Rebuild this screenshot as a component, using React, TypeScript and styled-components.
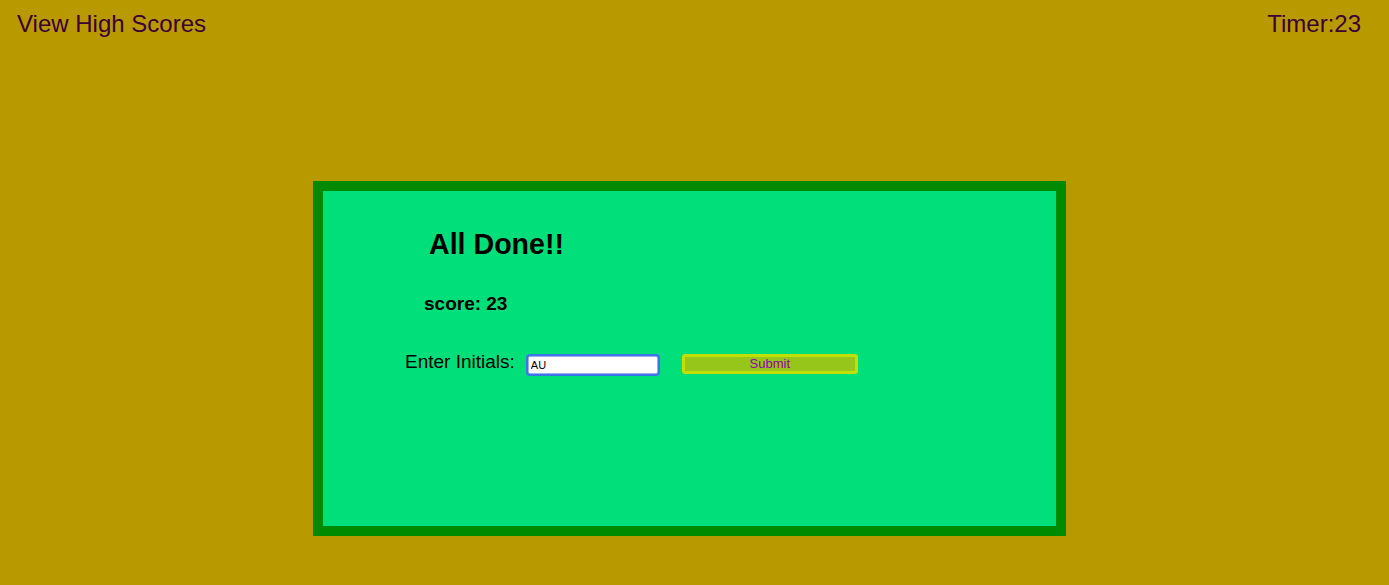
import React from "react";
import styled, { createGlobalStyle } from "styled-components";

const Global = createGlobalStyle`
  html, body { margin: 0; padding: 0; }
  body {
    background: #b89a00;
    font-family: "Liberation Sans", Arial, sans-serif;
    width: 1389px;
    height: 585px;
    overflow: hidden;
  }
`;

const Page = styled.div`
  display: flex;
  flex-direction: column;
  align-items: flex-start;
`;

const Header = styled.header`
  width: 100%;
  box-sizing: border-box;
  display: flex;
  justify-content: space-between;
  align-items: center;
  padding: 10px 28px 0 17px;
  font-size: 24px;
  line-height: 28px;
  color: #3b0038;
`;

const Card = styled.section`
  margin: 143px 0 0 313px;
  width: 753px;
  height: 355px;
  box-sizing: border-box;
  border: 10px solid #008a00;
  background: #00df7a;
  display: flex;
  flex-direction: column;
  align-items: flex-start;
`;

const Title = styled.h1`
  margin: 37px 0 0 106px;
  font-size: 28.6px;
  line-height: 32px;
  font-weight: bold;
  color: #000;
`;

const Score = styled.p`
  margin: 33px 0 0 101px;
  font-size: 19px;
  line-height: 22px;
  font-weight: bold;
  color: #000;
`;

const Row = styled.div`
  margin: 36px 0 0 82px;
  display: flex;
  align-items: flex-start;
`;

const Label = styled.label`
  font-size: 19px;
  line-height: 22px;
  color: #000;
`;

const Input = styled.input`
  margin: 5px 0 0 13px;
  width: 130px;
  height: 18px;
  box-sizing: border-box;
  border: 1px solid #9ab0f0;
  outline: 2px solid #3d74e8;
  outline-offset: 0;
  border-radius: 2px;
  background: #fff;
  font-family: "Liberation Sans", Arial, sans-serif;
  font-size: 11px;
  padding: 0 2px;
  color: #000;
`;

const Button = styled.button`
  margin: 3px 0 0 24px;
  width: 176px;
  height: 20px;
  box-sizing: border-box;
  border: 3px solid #c2e000;
  border-radius: 3px;
  background: #96c61a;
  color: #9000b0;
  font-family: "Liberation Sans", Arial, sans-serif;
  font-size: 13px;
  line-height: 14px;
  padding: 0;
`;

export default function App() {
  return (
    <Page>
      <Global />
      <Header>
        <span>View High Scores</span>
        <span>Timer:23</span>
      </Header>
      <Card>
        <Title>All Done!!</Title>
        <Score>score: 23</Score>
        <Row>
          <Label>Enter Initials:</Label>
          <Input defaultValue="AU" />
          <Button>Submit</Button>
        </Row>
      </Card>
    </Page>
  );
}
